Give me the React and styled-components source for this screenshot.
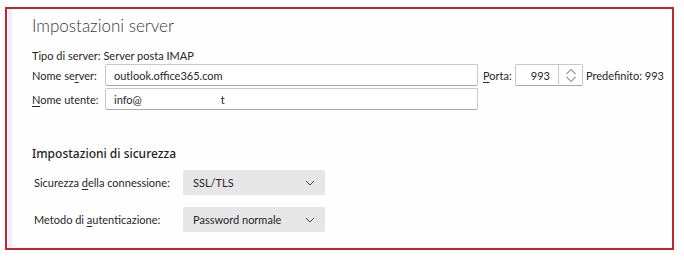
import styled, { createGlobalStyle } from 'styled-components';

const GlobalStyle = createGlobalStyle`
  body {
    margin: 0;
    background: #fefefe;
    font-family: Lato, 'Noto Sans', sans-serif;
    color: #262626;
  }
`;

const Frame = styled.div`
  margin: 7px 0 0 5px;
  width: 665px;
  height: 239px;
  border: 2px solid #c1272d;
  display: flex;
  background: #fefefe;
`;

const Strip = styled.div`
  width: 4px;
  margin-left: 1px;
  background: #eef0f5;
`;

const Content = styled.div`
  flex: 1;
  padding: 5px 0 0 20px;
  display: flex;
  flex-direction: column;
`;

const Title = styled.h2`
  margin: 0;
  font-family: Lato, 'Open Sans', sans-serif;
  font-weight: 300;
  font-size: 17px;
  line-height: 24px;
  color: #3a3a3a;
`;

const Line = styled.div`
  font-size: 11px;
  line-height: 14px;
  margin-top: 11px;
`;

const FieldRow = styled.div`
  display: flex;
  align-items: center;
  height: 22px;
  margin-top: ${(p) => p.$top || 2}px;
  font-size: 11px;
`;

const Label = styled.span`
  width: ${(p) => p.$w}px;
  flex: none;
  padding-left: ${(p) => p.$pad || 0}px;
  box-sizing: border-box;
`;

const Key = styled.u`
  text-decoration-thickness: 1px;
  text-underline-offset: 2px;
`;

const TextBox = styled.div`
  box-sizing: border-box;
  width: ${(p) => p.$w}px;
  height: 22px;
  flex: none;
  border: 1px solid #c8c8cc;
  border-bottom-color: #a8a8ae;
  border-radius: ${(p) => (p.$right ? '2px 0 0 2px' : '2px')};
  padding: 0 8px;
  display: flex;
  align-items: center;
  justify-content: ${(p) => (p.$right ? 'flex-end' : 'flex-start')};
  white-space: pre;
  background: #fff;
`;

const PortLabel = styled.span`
  margin-left: 5px;
  width: 32px;
  flex: none;
`;

const Spinner = styled.div`
  width: 24px;
  height: 22px;
  flex: none;
  display: flex;
  flex-direction: column;
  align-items: center;
  justify-content: center;
  gap: 1px;
  border: 1px solid #c8c8cc;
  border-left: none;
  border-bottom-color: #a8a8ae;
  box-sizing: border-box;
  border-radius: 0 2px 2px 0;
  background: #fff;
`;

const Hint = styled.span`
  margin-left: 3px;
  white-space: nowrap;
`;

const Section = styled.h3`
  margin: 36px 0 0 0;
  font-family: 'Noto Sans', sans-serif;
  font-size: 12px;
  font-weight: 500;
  line-height: 16px;
  color: #1f1f1f;
`;

const Select = styled.div`
  box-sizing: border-box;
  width: 142px;
  height: 25px;
  background: #e6e6e6;
  border-radius: 2px;
  padding: 0 10px 0 10px;
  display: flex;
  align-items: center;
  justify-content: space-between;
`;

const SelectRow = styled(FieldRow)`
  height: 25px;
`;

const Chevron = ({ up }) => (
  <svg width="12" height="7" viewBox="0 0 12 7">
    <path
      d={up ? 'M1.5 6 L6 1.5 L10.5 6' : 'M1.5 1 L6 5.5 L10.5 1'}
      fill="none"
      stroke="#555"
      strokeWidth="1"
    />
  </svg>
);

const SmallChevron = () => (
  <svg width="10" height="6" viewBox="0 0 10 6">
    <path d="M1 1 L5 5 L9 1" fill="none" stroke="#444" strokeWidth="1" />
  </svg>
);

export default function App() {
  return (
    <>
      <GlobalStyle />
      <Frame>
        <Strip />
        <Content>
          <Title>Impostazioni server</Title>
          <Line>Tipo di server: Server posta IMAP</Line>
          <FieldRow $top={1}>
            <Label $w={73}>
              Nome se<Key>r</Key>ver:
            </Label>
            <TextBox $w={373}>outlook.office365.com</TextBox>
            <PortLabel>
              <Key>P</Key>orta:
            </PortLabel>
            <TextBox $w={44} $right>
              993
            </TextBox>
            <Spinner>
              <Chevron up />
              <Chevron />
            </Spinner>
            <Hint>Predefinito: 993</Hint>
          </FieldRow>
          <FieldRow $top={2}>
            <Label $w={73}>
              <Key>N</Key>ome utente:
            </Label>
            <TextBox $w={373}>{'info@                            t'}</TextBox>
          </FieldRow>
          <Section>Impostazioni di sicurezza</Section>
          <SelectRow $top={8}>
            <Label $w={151} $pad={2}>
              Sicurezza <Key>d</Key>ella connessione:
            </Label>
            <Select>
              SSL/TLS
              <SmallChevron />
            </Select>
          </SelectRow>
          <SelectRow $top={12}>
            <Label $w={151} $pad={2}>
              Metodo di <Key>a</Key>utenticazione:
            </Label>
            <Select>
              Password normale
              <SmallChevron />
            </Select>
          </SelectRow>
        </Content>
      </Frame>
    </>
  );
}
